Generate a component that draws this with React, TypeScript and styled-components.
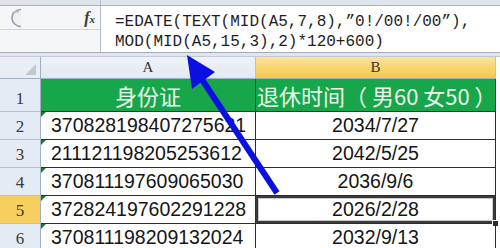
import styled, { createGlobalStyle } from "styled-components";

const GlobalStyle = createGlobalStyle`
  html, body {
    margin: 0;
    padding: 0;
    background: #ffffff;
    overflow: hidden;
  }
`;

interface RowData {
  id: string;
  date: string;
}

const ROWS: RowData[] = [
  { id: "370828198407275621", date: "2034/7/27" },
  { id: "211121198205253612", date: "2042/5/25" },
  { id: "370811197609065030", date: "2036/9/6" },
  { id: "372824197602291228", date: "2026/2/28" },
  { id: "370811198209132024", date: "2032/9/13" },
];

const ACTIVE_ROW = 5;

export default function App() {
  return (
    <>
      <GlobalStyle />
      <Page>
        <TopStrip>
          <StripTab />
        </TopStrip>
        <FormulaBar>
          <NameBox>
            <NameTop>
              <Knob viewBox="0 0 16 20" width="16" height="20">
                <path d="M15 1.5 A9 8.5 0 0 0 15 18.5" fill="#eef1f4" stroke="#97a1ac" strokeWidth="1.6" />
                <path d="M7 5 Q9 3.4 12 3.6" fill="none" stroke="#b3bcc6" strokeWidth="2" strokeLinecap="round" />
              </Knob>
              <Fx>
                f<small>x</small>
              </Fx>
            </NameTop>
            <NameBottom />
          </NameBox>
          <Formula>
            <div>=EDATE(TEXT(MID(A5,7,8),”0!/00!/00”),</div>
            <div>MOD(MID(A5,15,3),2)*120+600)</div>
          </Formula>
        </FormulaBar>
        <Gap />
        <Sheet>
          <Corner>
            <CornerMark />
          </Corner>
          <ColHeader>A</ColHeader>
          <ColHeader $active>B</ColHeader>
          <Filler />

          <RowHeader>1</RowHeader>
          <TitleCell $center>身份证</TitleCell>
          <TitleCell>退休时间（ 男60 女50 ）</TitleCell>
          <Filler />

          {ROWS.map((row, i) => {
            const n = i + 2;
            const active = n === ACTIVE_ROW;
            return (
              <Row key={row.id}>
                <RowHeader $active={active}>{n}</RowHeader>
                <IdCell>
                  <ErrorMark />
                  {row.id}
                </IdCell>
                <DateCell $active={active}>
                  {row.date}
                  {active && <FillHandle />}
                </DateCell>
                <Filler />
              </Row>
            );
          })}
        </Sheet>
        <Arrow viewBox="0 0 500 248" width="500" height="248">
          <line x1="277" y1="193" x2="201" y2="78" stroke="#0b10e2" strokeWidth="6" />
          <polygon points="187,55 215,72 192,89" fill="#0b10e2" />
        </Arrow>
      </Page>
    </>
  );
}

const Page = styled.div`
  position: relative;
  width: 500px;
  height: 248px;
  overflow: hidden;
  background: #ffffff;
  font-family: "Liberation Sans", Arial, sans-serif;
`;

const TopStrip = styled.div`
  height: 5px;
  background: #dfe4ea;
  border-bottom: 1px solid #a9b2bd;
  display: flex;
`;

const StripTab = styled.div`
  width: 100px;
  border-right: 1px solid #b7bfc9;
`;

const FormulaBar = styled.div`
  display: flex;
  height: 46px;
  border-bottom: 1px solid #a3acb7;
`;

const NameBox = styled.div`
  flex: none;
  width: 100px;
  display: flex;
  flex-direction: column;
  background: #f4f6f8;
  border-right: 1px solid #b5bdc7;
`;

const NameTop = styled.div`
  height: 23px;
  display: flex;
  align-items: center;
  justify-content: space-between;
  padding: 0 5px 0 6px;
  border-bottom: 1px solid #cdd3da;
`;

const Knob = styled.svg`
  flex: none;
  display: block;
`;

const Fx = styled.span`
  font-family: "Liberation Serif", serif;
  font-style: italic;
  font-weight: bold;
  font-size: 16px;
  color: #3a3a3a;

  small {
    font-size: 11px;
  }
`;

const NameBottom = styled.div`
  flex: 1;
`;

const Formula = styled.div`
  flex: 1;
  padding: 6px 0 0 14px;
  font-family: "Liberation Mono", "DejaVu Sans Mono", monospace;
  font-size: 16px;
  line-height: 20px;
  color: #1e1e1e;
  white-space: pre;
`;

const Gap = styled.div`
  height: 3px;
  background: #e1e6ec;
  border-bottom: 1px solid #c2c9d2;
`;

const Sheet = styled.div`
  display: grid;
  grid-template-columns: 41px 215px 240px 1fr;
  grid-template-rows: 22px 33px repeat(5, 28px);
`;

const Row = styled.div`
  display: contents;
`;

const Corner = styled.div`
  position: relative;
  background: #e9eef5;
  border-right: 1px solid #9fb0c4;
  border-bottom: 1px solid #9fb0c4;
`;

const CornerMark = styled.div`
  position: absolute;
  right: 4px;
  bottom: 3px;
  width: 0;
  height: 0;
  border-left: 11px solid transparent;
  border-bottom: 11px solid #c2c8cf;
`;

const ColHeader = styled.div<{ $active?: boolean }>`
  display: flex;
  align-items: center;
  justify-content: center;
  font-family: "Liberation Serif", serif;
  font-size: 15px;
  color: #333;
  background: ${(p) =>
    p.$active ? "linear-gradient(#fbe39a, #f6c849)" : "linear-gradient(#eef2f8, #e3e9f2)"};
  border-right: 1px solid #b5c3d3;
  border-bottom: 1px solid #9fb0c4;
`;

const Filler = styled.div`
  background: #ffffff;
`;

const RowHeader = styled.div<{ $active?: boolean }>`
  display: flex;
  align-items: flex-end;
  justify-content: center;
  padding-bottom: 2px;
  font-family: "Liberation Serif", serif;
  font-size: 17px;
  color: #3a3a3a;
  background: ${(p) => (p.$active ? "#f7cf5e" : "#e4ebf5")};
  border-right: 1px solid #9fb0c4;
  border-bottom: 1px solid #b3c2d3;
`;

const TitleCell = styled.div<{ $center?: boolean }>`
  display: flex;
  align-items: center;
  justify-content: ${(p) => (p.$center ? "center" : "flex-start")};
  padding-left: ${(p) => (p.$center ? "0" : "1px")};
  background: #17a74a;
  color: #e9f8ea;
  font-family: "Noto Sans CJK SC", "Noto Sans", sans-serif;
  font-size: 22px;
  white-space: nowrap;
  border-right: 1px solid #2b4a33;
  border-bottom: 1px solid #2d2d2d;
`;

const IdCell = styled.div`
  position: relative;
  display: flex;
  align-items: center;
  padding-left: 10px;
  font-size: 19.5px;
  color: #151515;
  white-space: nowrap;
  border-right: 1px solid #2d2d2d;
  border-bottom: 1px solid #2d2d2d;
`;

const ErrorMark = styled.div`
  position: absolute;
  left: 0;
  top: 0;
  width: 0;
  height: 0;
  border-top: 5px solid #1f7a2e;
  border-right: 5px solid transparent;
`;

const DateCell = styled.div<{ $active?: boolean }>`
  position: relative;
  display: flex;
  align-items: center;
  justify-content: center;
  font-size: 19.5px;
  color: #151515;
  border-right: 1px solid #2d2d2d;
  border-bottom: 1px solid #2d2d2d;
  box-shadow: ${(p) => (p.$active ? "inset 0 0 0 2px #3a3a3a, inset 0 0 0 3px #c9c9c9" : "none")};
`;

const FillHandle = styled.div`
  position: absolute;
  right: -4px;
  bottom: -4px;
  width: 5px;
  height: 5px;
  background: #2a2a2a;
  border: 1px solid #ffffff;
`;

const Arrow = styled.svg`
  position: absolute;
  left: 0;
  top: 0;
  pointer-events: none;
`;
